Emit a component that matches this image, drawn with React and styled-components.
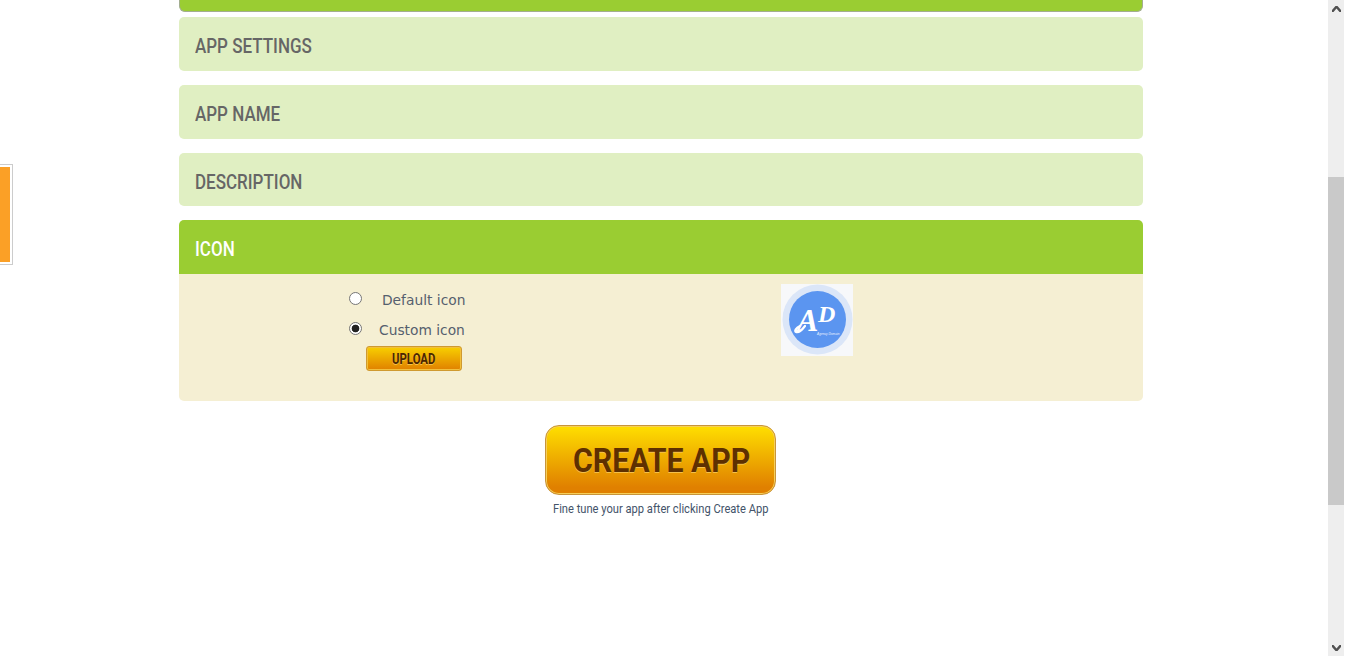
import React from "react";
import styled, { createGlobalStyle } from "styled-components";

const GlobalStyle = createGlobalStyle`
  html, body {
    margin: 0;
    padding: 0;
    height: 100%;
    overflow: hidden;
    background: #fff;
  }
`;

const sections = [
  { title: "APP SETTINGS", height: 54 },
  { title: "APP NAME", height: 54 },
  { title: "DESCRIPTION", height: 53 },
];

function AppLogo() {
  return (
    <svg width="72" height="72" viewBox="0 0 72 72">
      <rect width="72" height="72" fill="#f7f8fa" />
      <circle cx="36.500" cy="35.500" r="35" fill="#dbe6f8" />
      <circle cx="36.500" cy="35.500" r="28.500" fill="#5b95f0" />
      <path d="M24 42c-3 4-6 7-9 6-2-1 0-4 4-6" fill="none" stroke="#fff" strokeWidth="2.200" strokeLinecap="round" />
      <text x="16" y="47" fontFamily="Liberation Serif, serif" fontStyle="italic" fontWeight="700" fontSize="32" fill="#fff">A</text>
      <text x="37" y="38" fontFamily="Liberation Serif, serif" fontStyle="italic" fontWeight="700" fontSize="24" fill="#fff">D</text>
      <text x="36" y="51" fontFamily="Liberation Sans, sans-serif" fontStyle="italic" fontSize="3.200" fill="#e8f0ff">Agency Domain</text>
    </svg>
  );
}

export default function App() {
  return (
    <Page>
      <GlobalStyle />
      <SideTab />
      <Main>
        <Column>
          <TopBar />
          <Sections>
            {sections.map((s) => (
              <Section key={s.title} $height={s.height}><Narrow>{s.title}</Narrow></Section>
            ))}
            <div>
              <Section $active $height={54}><Narrow>ICON</Narrow></Section>
              <IconBody>
                <Options>
                  <Option $labelGap={20}>
                    <input type="radio" name="icon" readOnly />
                    <span>Default icon</span>
                  </Option>
                  <Option $labelGap={17}>
                    <input type="radio" name="icon" defaultChecked />
                    <span>Custom icon</span>
                  </Option>
                  <UploadButton><Narrow $scale={0.81} $origin="center">UPLOAD</Narrow></UploadButton>
                </Options>
                <AppLogo />
              </IconBody>
            </div>
          </Sections>
          <CreateWrap>
            <CreateButton><Narrow $scale={0.89} $origin="center">CREATE APP</Narrow></CreateButton>
            <Caption><Narrow $scale={0.857} $origin="center">Fine tune your app after clicking Create App</Narrow></Caption>
          </CreateWrap>
        </Column>
      </Main>
      <Scrollbar>
        <ArrowBox>
          <svg width="9" height="6" viewBox="0 0 9 6"><path d="M0 6V4L3.500 0h2L9 4v2H7.500L4.500 2.500 1.500 6z" fill="#505050" /></svg>
        </ArrowBox>
        <Track>
          <Thumb />
        </Track>
        <ArrowBox>
          <svg width="9" height="6" viewBox="0 0 9 6"><path d="M0 0v2l3.500 4h2L9 2V0H7.500L4.500 3.500 1.500 0z" fill="#505050" /></svg>
        </ArrowBox>
      </Scrollbar>
    </Page>
  );
}

const Page = styled.div`
  position: relative;
  display: flex;
  width: 1350px;
  height: 656px;
  padding-right: 6px;
  box-sizing: border-box;
  overflow: hidden;
`;

const SideTab = styled.div`
  position: absolute;
  left: -4px;
  top: 164px;
  width: 11px;
  height: 95px;
  padding: 2px;
  background: #fba026;
  background-clip: content-box;
  border: 1px solid #ccc;
`;

const Main = styled.div`
  flex: 1;
  min-width: 0;
`;

const Column = styled.div`
  width: 964px;
  margin-left: 179px;
`;

const TopBar = styled.div`
  height: 12px;
  box-sizing: border-box;
  background: #9acd32;
  border: 1px solid #a3ad90;
  border-top: 0;
  border-radius: 0 0 6px 6px;
`;

const Sections = styled.div`
  display: flex;
  flex-direction: column;
  gap: 14px;
  margin-top: 5px;
`;

/* no DIN style font here, so Roboto gets squeezed to the same widths */
const Narrow = styled.span`
  display: inline-block;
  white-space: nowrap;
  transform: scaleX(${(p) => p.$scale || 0.85});
  transform-origin: ${(p) => p.$origin || "left"} center;
`;

const Section = styled.div`
  display: flex;
  align-items: center;
  height: ${(p) => p.$height}px;
  padding: 4px 16px 0;
  box-sizing: border-box;
  font-family: Roboto, sans-serif;
  font-size: 20px;
  font-weight: 500;
  color: ${(p) => (p.$active ? "#fff" : "#666")};
  background: ${(p) => (p.$active ? "#9acd32" : "#e0efc2")};
  border-radius: ${(p) => (p.$active ? "5px 5px 0 0" : "5px")};
`;

const IconBody = styled.div`
  display: grid;
  grid-template-columns: 602px 72px;
  height: 127px;
  padding-top: 10px;
  box-sizing: border-box;
  background: #f5efd3;
  border-radius: 0 0 5px 5px;
`;

const Options = styled.div`
  display: flex;
  flex-direction: column;
  align-items: flex-start;
  padding-left: 170px;
`;

const Option = styled.label`
  display: flex;
  align-items: center;
  height: 30px;
  font-family: "DejaVu Sans", sans-serif;
  font-size: 13.8px;
  color: #55606e;

  span {
    margin-top: 2px;
  }

  input {
    appearance: none;
    box-sizing: border-box;
    width: 13px;
    height: 13px;
    margin: -2px ${(p) => p.$labelGap}px 0 0;
    background: #fff;
    border: 1px solid #767676;
    border-radius: 50%;
  }

  input:checked {
    background: radial-gradient(circle, #222 0 3.5px, #fff 4.2px);
  }
`;

const UploadButton = styled.button`
  width: 96px;
  height: 25px;
  margin: 2px 0 0 17px;
  padding: 0;
  font-family: Roboto, sans-serif;
  font-size: 14px;
  font-weight: 700;
  color: #4a2600;
  text-shadow: 0 1px 0 #f5c04a;
  background: linear-gradient(#f8d000, #e08000);
  border: 1px solid #cf9a30;
  border-radius: 3px;
  box-shadow: inset 0 0 0 1px #f2c03c;
`;

const CreateWrap = styled.div`
  display: flex;
  flex-direction: column;
  align-items: center;
  margin-top: 24px;
  padding-right: 1px;
`;

const CreateButton = styled.button`
  width: 231px;
  height: 70px;
  padding: 0 0 0 2px;
  font-family: Roboto, sans-serif;
  font-size: 34px;
  font-weight: 700;
  color: #5e3000;
  text-shadow: 0 1px 0 #f5c04a;
  background: linear-gradient(#ffdf00, #e08000 90%);
  border: 1px solid #c8953a;
  border-radius: 14px;
  box-shadow: inset 0 0 0 1px #f6cf5a;
`;

const Caption = styled.div`
  margin-top: 7px;
  font-family: Roboto, sans-serif;
  font-size: 13px;
  line-height: 14px;
  color: #44546a;
`;

const Scrollbar = styled.div`
  display: flex;
  flex-direction: column;
  flex: none;
  width: 16px;
  background: #eee;
`;

const ArrowBox = styled.div`
  display: flex;
  align-items: center;
  justify-content: center;
  height: 17px;
  flex: none;
`;

const Track = styled.div`
  flex: 1;
  padding-top: 160px;
`;

const Thumb = styled.div`
  height: 328px;
  background: #c9c9c9;
`;
